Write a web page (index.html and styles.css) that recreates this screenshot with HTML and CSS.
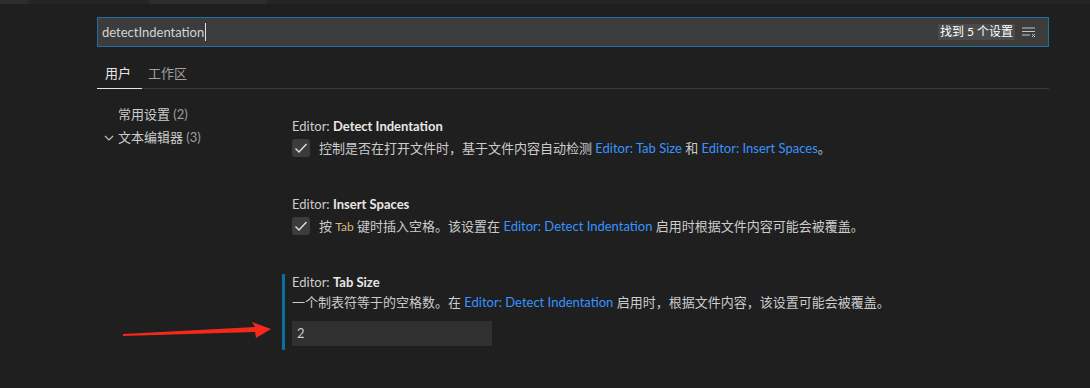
FILE: index.html
```html
<!DOCTYPE html>
<html lang="zh-CN">
<head>
    <meta charset="UTF-8">
    <meta name="viewport" content="width=device-width, initial-scale=1.0">
    <title>设置</title>
    <link rel="stylesheet" href="styles.css">
</head>
<body>

    <div class="tab-strip">
        <span class="strip-tab strip-first"></span>
        <span class="strip-tab strip-second"></span>
    </div>

    <div class="settings-editor">
        <div class="search-box">
            <span class="search-text">detectIndentation</span><span class="caret"></span>
            <span class="search-count">找到 5 个设置</span>
            <svg class="clear-icon" width="16" height="16" viewBox="0 0 16 16">
                <path d="M1 4h13M1 7.5h13M1 11h8" stroke="#c5c5c5" stroke-width="1.1" fill="none"/>
                <path d="M11 10l3 3M14 10l-3 3" stroke="#c5c5c5" stroke-width="1" fill="none"/>
            </svg>
        </div>

        <div class="scope-tabs">
            <span class="scope-tab active">用户</span>
            <span class="scope-tab">工作区</span>
        </div>

        <div class="settings-body">
            <div class="toc">
                <div class="toc-item">常用设置 <span class="count">(2)</span></div>
                <div class="toc-item">
                    <svg class="chevron" width="12" height="12" viewBox="0 0 12 12">
                        <path d="M2 4l4 4 4-4" stroke="#c5c5c5" stroke-width="1.1" fill="none"/>
                    </svg>
                    文本编辑器 <span class="count">(3)</span>
                </div>
            </div>

            <div class="settings-list">
                <div class="setting">
                    <div class="setting-title">Editor: <b>Detect Indentation</b></div>
                    <div class="check-row">
                        <span class="checkbox">
                            <svg width="16" height="16" viewBox="0 0 16 16"><path d="M2.5 8.5l3.5 3.5 7.5-8" stroke="#e0e0e0" stroke-width="1.4" fill="none"/></svg>
                        </span>
                        <span class="desc">控制是否在打开文件时，基于文件内容自动检测 <a class="link">Editor: Tab Size</a> 和 <a class="link">Editor: Insert Spaces</a>。</span>
                    </div>
                </div>

                <div class="setting">
                    <div class="setting-title">Editor: <b>Insert Spaces</b></div>
                    <div class="check-row">
                        <span class="checkbox">
                            <svg width="16" height="16" viewBox="0 0 16 16"><path d="M2.5 8.5l3.5 3.5 7.5-8" stroke="#e0e0e0" stroke-width="1.4" fill="none"/></svg>
                        </span>
                        <span class="desc">按 <code>Tab</code> 键时插入空格。该设置在 <a class="link">Editor: Detect Indentation</a> 启用时根据文件内容可能会被覆盖。</span>
                    </div>
                </div>

                <div class="setting focused">
                    <div class="setting-title">Editor: <b>Tab Size</b></div>
                    <div class="desc">一个制表符等于的空格数。在 <a class="link">Editor: Detect Indentation</a> 启用时，根据文件内容，该设置可能会被覆盖。</div>
                    <div class="number-input">2</div>
                </div>
            </div>
        </div>
    </div>

    <svg class="annotation-arrow" width="160" height="24" viewBox="0 0 160 24">
        <path d="M0 13 L132 6 L129 1 L148 8 L133 17 L132 11 L0 15 Z" fill="#f5281c"/>
    </svg>

</body>
</html>
```

FILE: styles.css
```css
* { margin: 0; padding: 0; box-sizing: border-box; }
body {
    background: #1f1f1f;
    color: #cccccc;
    font-family: "Segoe UI", Lato, "Noto Sans CJK SC", sans-serif;
    font-size: 13px;
    width: 1090px;
    height: 388px;
    overflow: hidden;
    position: relative;
}

.tab-strip { height: 4px; background: #252526; display: flex; }
.strip-tab { display: block; height: 4px; background: #2d2d2d; }
.strip-first { width: 28px; }
.strip-second { width: 118px; margin-left: 121px; }

.settings-editor { padding-left: 97px; width: 1049px; }

.search-box {
    margin-top: 13px;
    height: 30px;
    background: #3c3c3c;
    border: 1px solid #1f6ea6;
    display: flex;
    align-items: center;
    padding: 0 11px 0 4px;
}
.search-text { color: #d4d4d4; }
.caret { width: 1px; height: 18px; background: #e0e0e0; margin-left: 1px; }
.search-count {
    margin-left: auto;
    background: #4b4b4b;
    color: #ffffff;
    font-size: 12px;
    line-height: 16px;
    padding: 0 2px;
}
.clear-icon { margin-left: 6px; }

.scope-tabs {
    margin-top: 12px;
    display: flex;
    border-bottom: 1px solid #3a3a3a;
    height: 30px;
}
.scope-tab {
    line-height: 28px;
    color: #a0a0a0;
    padding: 0 6px;
}
.scope-tab.active {
    color: #e7e7e7;
    padding: 0 11px 0 8px;
    border-bottom: 1px solid #e7e7e7;
    margin-bottom: -1px;
    height: 30px;
}

.settings-body { display: flex; }

.toc { width: 185px; padding-top: 14px; }
.toc-item {
    line-height: 23px;
    padding-left: 21px;
    color: #cccccc;
    position: relative;
}
.toc-item .count { color: #9d9d9d; }
.chevron { position: absolute; left: 6px; top: 6px; }

.settings-list { padding-top: 29px; display: flex; flex-direction: column; gap: 39px; }
.setting { border-left: 3px solid transparent; padding-left: 7px; }
.setting.focused { border-left-color: #0e6f9c; padding-bottom: 4px; }
.setting-title { line-height: 16px; color: #cccccc; }
.setting-title b { color: #e7e7e7; font-weight: 700; }

.check-row { display: flex; align-items: center; margin-top: 5px; height: 18px; }
.checkbox {
    width: 18px;
    height: 18px;
    background: #3c3c3c;
    border-radius: 3px;
    display: flex;
    align-items: center;
    justify-content: center;
    margin-right: 9px;
}
.desc { line-height: 18px; color: #cccccc; }
.setting.focused .desc { margin-top: 3px; }
.link { color: #3794ff; }
code {
    font-family: "Segoe UI", Lato, sans-serif;
    font-size: 12px;
    color: #d7ba7d;
}

.number-input {
    margin-top: 10px;
    width: 200px;
    height: 25px;
    background: #303030;
    color: #cccccc;
    line-height: 25px;
    padding-left: 5px;
}

.annotation-arrow { position: absolute; left: 123px; top: 321px; }
```
